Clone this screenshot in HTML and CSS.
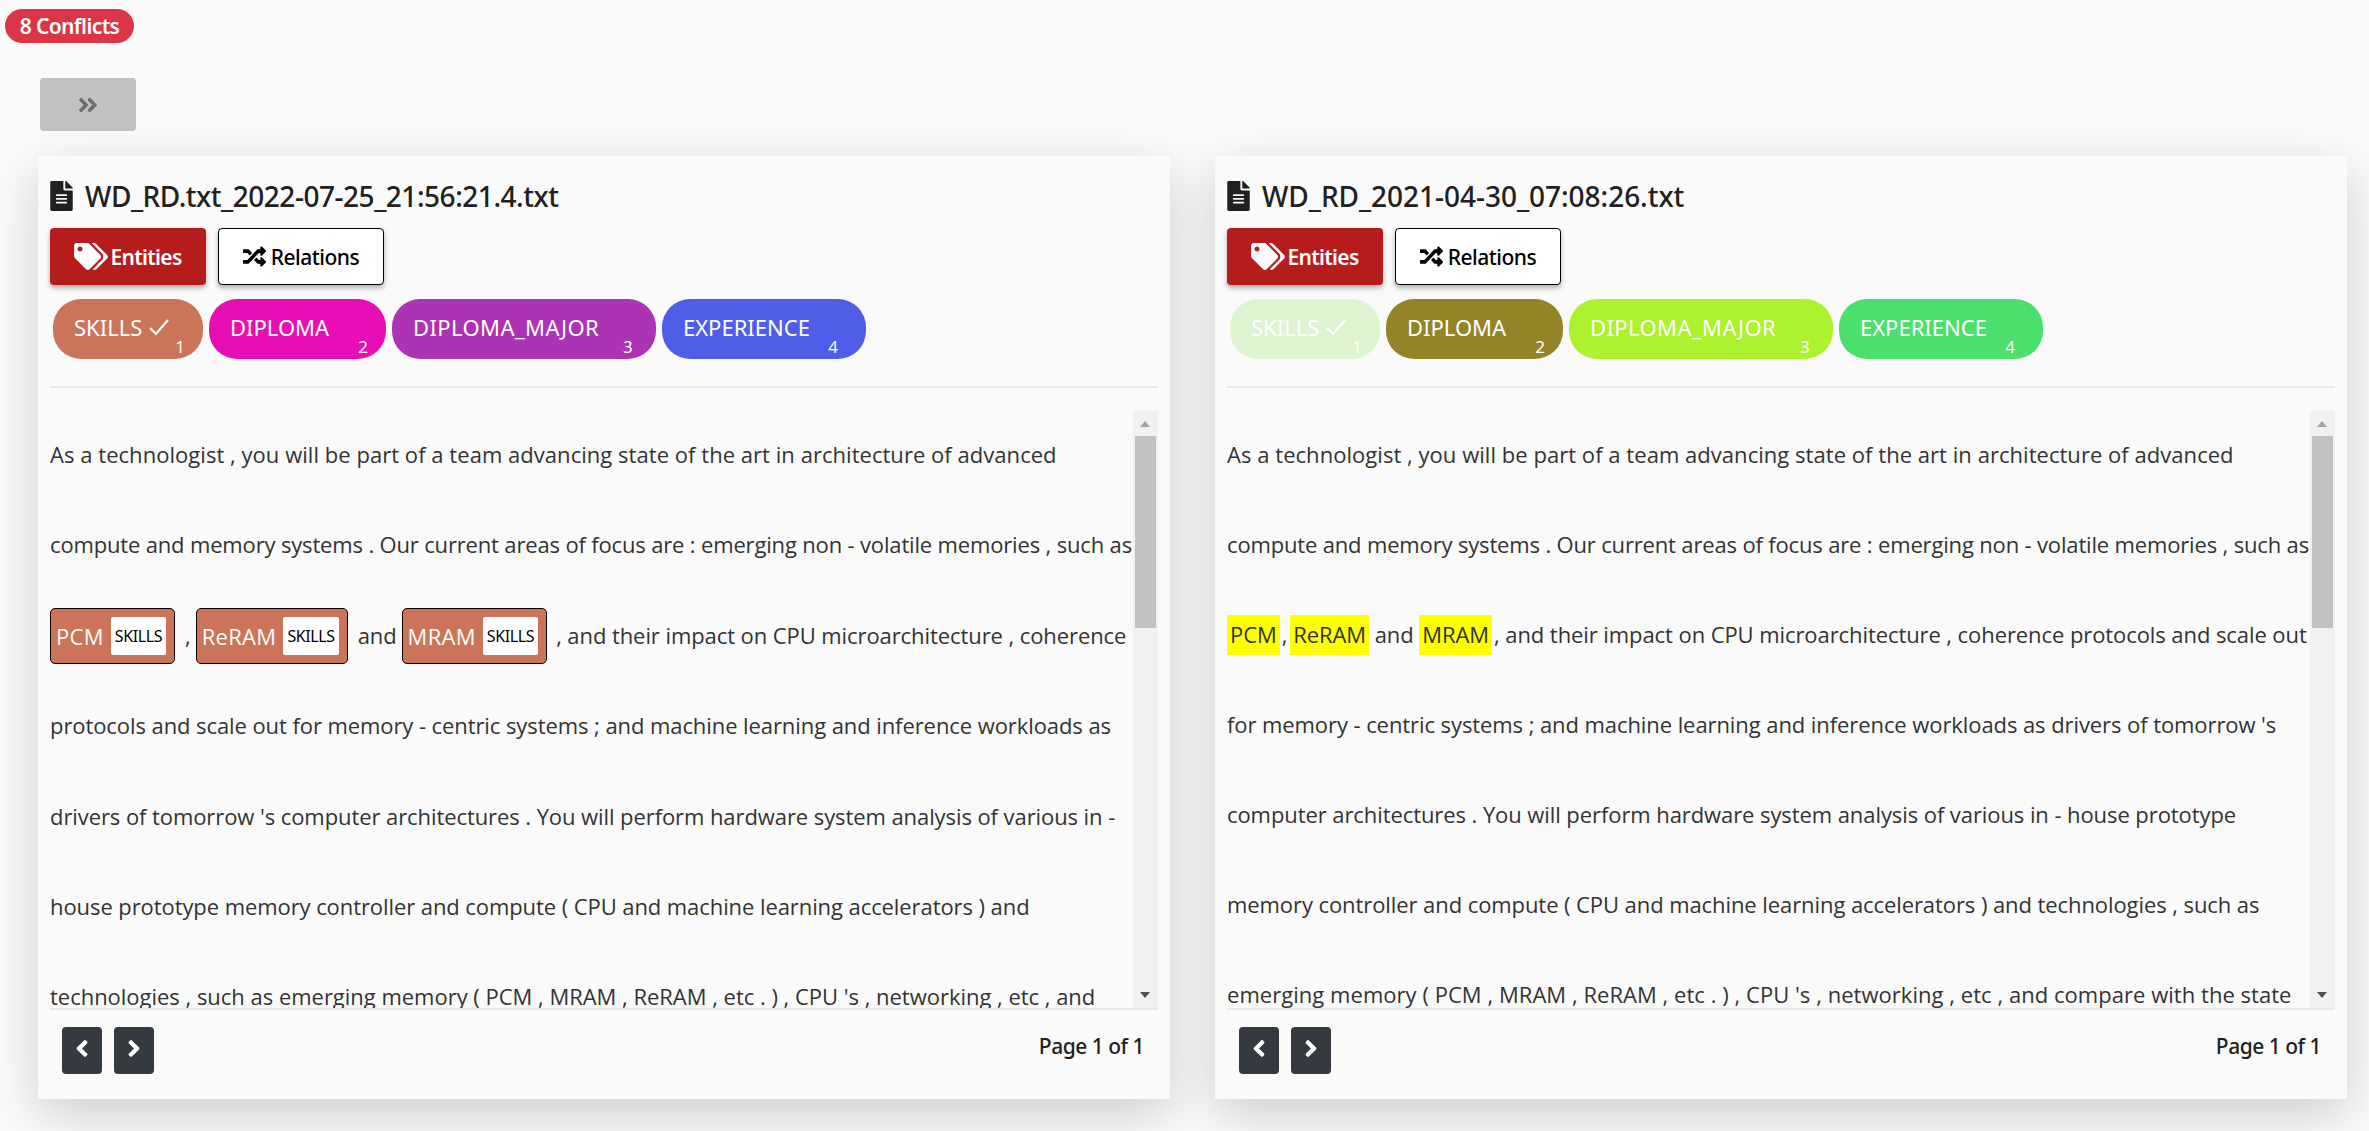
FILE: index.html
```html
<!DOCTYPE html>
<html lang="en">
<head>
<meta charset="utf-8">
<title>Conflicts</title>
<link rel="stylesheet" href="styles.css">
</head>
<body>
<svg class="defs" width="0" height="0" aria-hidden="true">
  <symbol id="i-file" viewBox="0 0 384 512"><path d="M224 136V0H24C10.7 0 0 10.7 0 24v464c0 13.3 10.7 24 24 24h336c13.3 0 24-10.7 24-24V160H248c-13.2 0-24-10.8-24-24zm64 236c0 6.6-5.4 12-12 12H108c-6.6 0-12-5.4-12-12v-8c0-6.6 5.4-12 12-12h168c6.6 0 12 5.4 12 12v8zm0-64c0 6.6-5.4 12-12 12H108c-6.6 0-12-5.4-12-12v-8c0-6.6 5.4-12 12-12h168c6.6 0 12 5.4 12 12v8zm0-72v8c0 6.6-5.4 12-12 12H108c-6.6 0-12-5.4-12-12v-8c0-6.6 5.4-12 12-12h168c6.6 0 12 5.4 12 12zm96-114.1v6.1H256V0h6.1c6.4 0 12.5 2.5 17 7l97.9 98c4.5 4.5 7 10.6 7 16.9z"/></symbol>
  <symbol id="i-tags" viewBox="0 0 640 512"><path d="M497.941 225.941L286.059 14.059A48 48 0 0 0 252.118 0H48C21.49 0 0 21.49 0 48v204.118a48 48 0 0 0 14.059 33.941l211.882 211.882c18.744 18.745 49.136 18.746 67.882 0l204.118-204.118c18.745-18.745 18.745-49.137 0-67.882zM112 160c-26.51 0-48-21.49-48-48s21.49-48 48-48 48 21.49 48 48-21.49 48-48 48zm513.941 133.823L421.823 497.941c-18.745 18.745-49.137 18.745-67.882 0l-.36-.36L527.64 323.522c16.999-16.999 26.36-39.6 26.36-63.64s-9.362-46.641-26.36-63.64L331.397 0h48.721a48 48 0 0 1 33.941 14.059l211.882 211.882c18.745 18.745 18.745 49.137 0 67.882z"/></symbol>
  <symbol id="i-random" viewBox="0 0 512 512"><path d="M504.971 359.029c9.373 9.373 9.373 24.569 0 33.941l-80 79.984c-15.01 15.01-40.971 4.49-40.971-16.971V416h-58.785a12.004 12.004 0 0 1-8.773-3.812l-70.556-75.596 53.333-57.143L352 336h32v-39.981c0-21.438 25.943-31.998 40.971-16.971l80 79.981zM12 176h84l52.781 56.551 53.333-57.143-70.556-75.596A11.999 11.999 0 0 0 122.785 96H12c-6.627 0-12 5.373-12 12v56c0 6.627 5.373 12 12 12zm372 0v39.984c0 21.46 25.961 31.98 40.971 16.971l80-79.984c9.373-9.373 9.373-24.569 0-33.941l-80-79.981C409.943 24.021 384 34.582 384 56.019V96h-58.785a12.004 12.004 0 0 0-8.773 3.812L96 336H12c-6.627 0-12 5.373-12 12v56c0 6.627 5.373 12 12 12h110.785c3.326 0 6.503-1.381 8.773-3.812L352 176h32z"/></symbol>
  <symbol id="i-double" viewBox="0 0 448 512"><path d="M224.3 273l-136 136c-9.4 9.4-24.6 9.4-33.9 0l-22.6-22.6c-9.4-9.4-9.4-24.6 0-33.9l96.4-96.4-96.4-96.4c-9.4-9.4-9.4-24.6 0-33.9L54.3 103c9.4-9.4 24.6-9.4 33.9 0l136 136c9.5 9.4 9.5 24.6.1 34zm192-34l-136-136c-9.4-9.4-24.6-9.4-33.9 0l-22.6 22.6c-9.4 9.4-9.4 24.6 0 33.9l96.4 96.4-96.4 96.4c-9.4 9.4-9.4 24.6 0 33.9l22.6 22.6c9.4 9.4 24.6 9.4 33.9 0l136-136c9.4-9.2 9.4-24.4 0-33.8z"/></symbol>
  <symbol id="i-left" viewBox="0 0 256 512"><path d="M31.7 239l136-136c9.4-9.4 24.6-9.4 33.9 0l22.6 22.6c9.4 9.4 9.4 24.6 0 33.9L127.9 256l96.4 96.4c9.4 9.4 9.4 24.6 0 33.9L201.7 409c-9.4 9.4-24.6 9.4-33.9 0l-136-136c-9.5-9.4-9.5-24.6-.1-34z"/></symbol>
  <symbol id="i-right" viewBox="0 0 256 512"><path d="M224.3 273l-136 136c-9.4 9.4-24.6 9.4-33.9 0l-22.6-22.6c-9.4-9.4-9.4-24.6 0-33.9l96.4-96.4-96.4-96.4c-9.4-9.4-9.4-24.6 0-33.9L54.3 103c9.4-9.4 24.6-9.4 33.9 0l136 136c9.5 9.4 9.5 24.6.1 34z"/></symbol>
  <symbol id="i-check" viewBox="0 0 22 20"><path d="M2 11 L8 17 L20 3" fill="none" stroke="currentColor" stroke-width="2.2"/></symbol>
</svg>

<header class="top">
  <span class="badge">8 Conflicts</span>
  <button class="toggle" type="button"><svg class="toggle-icon"><use href="#i-double"/></svg></button>
</header>

<main class="panels">
  <section class="card">
    <h2 class="title"><svg class="file-icon"><use href="#i-file"/></svg>WD_RD.txt_2022-07-25_21:56:21.4.txt</h2>
    <div class="tabs">
      <button class="tab tab-on" type="button"><svg class="tags-icon"><use href="#i-tags"/></svg>Entities</button>
      <button class="tab tab-off" type="button"><svg class="rand-icon"><use href="#i-random"/></svg>Relations</button>
    </div>
    <div class="chips">
      <span class="chip a1">SKILLS <svg class="check"><use href="#i-check"/></svg><sub class="num">1</sub></span>
      <span class="chip w-dip a2">DIPLOMA<sub class="num">2</sub></span>
      <span class="chip w-maj a3">DIPLOMA_MAJOR<sub class="num">3</sub></span>
      <span class="chip w-exp a4">EXPERIENCE<sub class="num">4</sub></span>
    </div>
    <hr class="rule">
    <div class="doc">
      <div class="lines lines-l">
        <div class="line wide">As a technologist , you will be part of a team advancing state of the art in architecture of advanced</div>
        <div class="line tight">compute and memory systems . Our current areas of focus are : emerging non - volatile memories , such as</div>
        <div class="line"><span class="ent">PCM<span class="ent-tag">SKILLS</span></span><span class="sep">,</span><span class="ent">ReRAM<span class="ent-tag">SKILLS</span></span><span class="sep">and</span><span class="ent">MRAM<span class="ent-tag">SKILLS</span></span><span class="sep-end">, and their impact on CPU microarchitecture , coherence</span></div>
        <div class="line">protocols and scale out for memory - centric systems ; and machine learning and inference workloads as</div>
        <div class="line">drivers of tomorrow 's computer architectures . You will perform hardware system analysis of various in -</div>
        <div class="line">house prototype memory controller and compute ( CPU and machine learning accelerators ) and</div>
        <div class="line mid">technologies , such as emerging memory ( PCM , MRAM , ReRAM , etc . ) , CPU 's , networking , etc , and</div>
      </div>
      <div class="scrollbar"><span class="arrow-up"></span><span class="thumb"></span><span class="arrow-down"></span></div>
    </div>
    <footer class="foot">
      <div class="pager">
        <button class="page-btn" type="button"><svg class="chev"><use href="#i-left"/></svg></button>
        <button class="page-btn" type="button"><svg class="chev"><use href="#i-right"/></svg></button>
      </div>
      <span class="page-text">Page 1 of 1</span>
    </footer>
  </section>

  <section class="card">
    <h2 class="title title-b"><svg class="file-icon"><use href="#i-file"/></svg>WD_RD_2021-04-30_07:08:26.txt</h2>
    <div class="tabs">
      <button class="tab tab-on" type="button"><svg class="tags-icon"><use href="#i-tags"/></svg>Entities</button>
      <button class="tab tab-off" type="button"><svg class="rand-icon"><use href="#i-random"/></svg>Relations</button>
    </div>
    <div class="chips">
      <span class="chip b1">SKILLS <svg class="check"><use href="#i-check"/></svg><sub class="num">1</sub></span>
      <span class="chip w-dip b2">DIPLOMA<sub class="num">2</sub></span>
      <span class="chip w-maj b3">DIPLOMA_MAJOR<sub class="num">3</sub></span>
      <span class="chip w-exp b4">EXPERIENCE<sub class="num">4</sub></span>
    </div>
    <hr class="rule">
    <div class="doc">
      <div class="lines">
        <div class="line wide">As a technologist , you will be part of a team advancing state of the art in architecture of advanced</div>
        <div class="line tight">compute and memory systems . Our current areas of focus are : emerging non - volatile memories , such as</div>
        <div class="line"><mark class="hl">PCM</mark><span class="gap">,</span><mark class="hl">ReRAM</mark> and <mark class="hl">MRAM</mark><span class="after">, and their impact on CPU microarchitecture , coherence protocols and scale out</span></div>
        <div class="line">for memory - centric systems ; and machine learning and inference workloads as drivers of tomorrow 's</div>
        <div class="line">computer architectures . You will perform hardware system analysis of various in - house prototype</div>
        <div class="line">memory controller and compute ( CPU and machine learning accelerators ) and technologies , such as</div>
        <div class="line wide">emerging memory ( PCM , MRAM , ReRAM , etc . ) , CPU 's , networking , etc , and compare with the state</div>
      </div>
      <div class="scrollbar"><span class="arrow-up"></span><span class="thumb"></span><span class="arrow-down"></span></div>
    </div>
    <footer class="foot">
      <div class="pager">
        <button class="page-btn" type="button"><svg class="chev"><use href="#i-left"/></svg></button>
        <button class="page-btn" type="button"><svg class="chev"><use href="#i-right"/></svg></button>
      </div>
      <span class="page-text">Page 1 of 1</span>
    </footer>
  </section>
</main>
</body>
</html>
```

FILE: styles.css
```css
* { box-sizing: border-box; }
html, body { margin: 0; height: 100%; }
body {
  background: #fafafa;
  color: #212529;
  font-family: "Noto Sans", sans-serif;
  overflow: hidden;
}
.defs { display: block; height: 0; }
.top { display: flex; flex-direction: column; align-items: flex-start; }
.badge {
  margin: 9px 0 0 5px;
  height: 34px;
  width: 129px;
  border-radius: 17px;
  background: #dc3545;
  color: #fff;
  font-size: 21px;
  font-weight: 600;
  line-height: 34px;
  text-align: center;
  letter-spacing: -0.6px;
}
.toggle {
  margin: 35px 0 0 40px;
  width: 96px;
  height: 53px;
  border: 0;
  border-radius: 4px;
  background: #c1c1c1;
  display: flex;
  align-items: center;
  justify-content: center;
  padding: 0;
}
.toggle-icon { width: 20px; height: 24px; fill: #6c6c6c; }
.panels {
  display: flex;
  gap: 45px;
  margin-top: 25px;
  padding: 0 22px 0 38px;
}
.card {
  flex: 1 1 0;
  height: 943px;
  padding: 0 12px;
  background: #fafafa;
  box-shadow: 0 16px 48px rgba(0, 0, 0, .175);
  display: flex;
  flex-direction: column;
}
.title {
  margin: 20px 0 0;
  height: 40px;
  display: flex;
  align-items: center;
  font-size: 28px;
  font-weight: 500;
  letter-spacing: -0.47px;
  color: #212121;
}
.title-b { letter-spacing: -0.03px; }
.file-icon { width: 23px; height: 30px; fill: #212121; margin-right: 12px; }
.tabs { display: flex; gap: 12px; margin-top: 12px; }
.tab {
  height: 57px;
  border-radius: 4px;
  font-family: inherit;
  font-size: 21px;
  display: flex;
  align-items: center;
  justify-content: center;
  padding: 0;
  box-shadow: 0 3px 5px rgba(0, 0, 0, .3);
  letter-spacing: -0.5px;
}
.tab-on {
  width: 156px;
  background: #b71c1c;
  border: 0;
  color: #fff;
  font-weight: 600;
  letter-spacing: -0.7px;
}
.tab-off {
  width: 166px;
  background: #fff;
  border: 1px solid #000;
  color: #000;
  font-weight: 500;
}
.tags-icon { width: 34px; height: 27px; fill: #fff; margin-right: 2px; }
.rand-icon { width: 23px; height: 23px; fill: #000; margin-right: 5px; }
.chips { display: flex; gap: 6px; margin: 14px 0 0 3px; }
.chip {
  position: relative;
  height: 60px;
  width: 150px;
  border-radius: 28px;
  color: #fff;
  font-size: 22px;
  line-height: 56px;
  padding-left: 21px;
  white-space: nowrap;
}
.w-dip { width: 177px; }
.w-maj { width: 264px; letter-spacing: .4px; }
.w-exp { width: 204px; }
.num {
  position: absolute;
  right: 18px;
  bottom: 2px;
  font-size: 17px;
  line-height: 20px;
}
.w-maj .num { right: 23px; }
.w-exp .num { right: 28px; }
.check { width: 22px; height: 20px; vertical-align: -1px; }
.a1 { background: #cc7459; }
.a2 { background: #e80eb5; }
.a3 { background: #ad33b5; }
.a4 { background: #4e5ee8; }
.b1 { background: #dcf4cf; }
.b2 { background: #938428; }
.b3 { background: #acf22e; }
.b4 { background: #4be06b; }
.rule { margin: 27px 0 0; border: 0; border-top: 2px solid #e8e8e8; }
.doc {
  position: relative;
  height: 599px;
  margin-top: 23px;
  border-bottom: 2px solid #e8e8e8;
  overflow: hidden;
}
.lines {
  margin-top: -2px;
  font-family: "Open Sans", sans-serif;
  font-size: 22px;
  color: #333;
  line-height: 90px;
  letter-spacing: -0.08px;
}
.lines-l { line-height: 90.4px; }
.line { white-space: nowrap; height: 1lh; }
.tight { letter-spacing: -0.16px; }
.wide { letter-spacing: 0.04px; }
.mid { letter-spacing: -0.02px; }
.ent {
  display: inline-flex;
  align-items: center;
  height: 56px;
  margin-bottom: 4px;
  vertical-align: middle;
  background: #cc7459;
  border: 1px solid #000;
  border-radius: 5px;
  color: #fff;
  line-height: 1;
  padding: 0 8px 0 5px;
  letter-spacing: .3px;
}
.ent-tag {
  margin-left: 7px;
  background: #fff;
  color: #000;
  font-family: "Noto Sans", sans-serif;
  font-size: 16px;
  border-radius: 2px;
  height: 38px;
  line-height: 38px;
  padding: 0 4px;
  letter-spacing: -0.4px;
}
.sep { margin: 0 5px 0 10px; }
.sep-end { margin-left: 9px; }
.gap { margin: 0 3px 0 2px; }
.after { margin-left: 2px; }
.hl { background: #ff0; color: inherit; padding: 4px 3px 6px; }
.scrollbar {
  position: absolute;
  top: 0;
  right: 0;
  bottom: 0;
  width: 25px;
  background: #f1f1f1;
  display: flex;
  flex-direction: column;
  align-items: center;
}
.arrow-up, .arrow-down {
  position: absolute;
  left: 7px;
  width: 0;
  height: 0;
  border-left: 5.5px solid transparent;
  border-right: 5.5px solid transparent;
}
.arrow-up { top: 10px; border-bottom: 6px solid #a3a3a3; }
.arrow-down { bottom: 10px; border-top: 6px solid #505050; }
.thumb {
  margin-top: 25px;
  width: 21px;
  height: 192px;
  background: #c1c1c1;
}
.foot {
  display: flex;
  justify-content: space-between;
  align-items: flex-start;
  padding: 17px 14px 0 12px;
}
.pager { display: flex; gap: 12px; }
.page-btn {
  width: 40px;
  height: 47px;
  border: 0;
  border-radius: 4px;
  background: #343a40;
  color: #fff;
  display: flex;
  align-items: center;
  justify-content: center;
  padding: 0 0 4px;
}
.chev { width: 14px; height: 27px; fill: #fff; }
.page-text { font-size: 21px; font-weight: 500; margin-top: 5px; letter-spacing: -0.5px; color: #212121; }
```
